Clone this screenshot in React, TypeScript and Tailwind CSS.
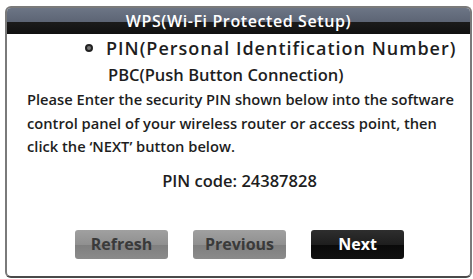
export default function App() {
  return (
    <div className="h-[279px] w-[473px] bg-white pl-[5px] pr-[1px] pt-[6px] pb-[1px] font-['Open_Sans',sans-serif]">
      <div className="flex h-full flex-col overflow-hidden rounded-[6px] border-2 border-[#7a7a7a] border-b-[#4a4a4a]">
        <div className="flex h-[26px] items-center justify-center bg-[linear-gradient(to_bottom,#6c7585_0%,#5c6474_55%,#1b1b1b_55%,#111_100%)] text-[16px] tracking-[0.6px] font-semibold text-white">
          WPS(Wi-Fi Protected Setup)
        </div>
        <div className="flex flex-1 flex-col text-[#1e1e1e]">
          <div className="flex h-[28px] items-center pl-[78px] text-[18px] tracking-[1px] font-semibold">
            <span className="mr-[13px] h-[8px] w-[8px] rounded-full border-[2.5px] border-[#222] bg-[#777]" />
            PIN(Personal Identification Number)
          </div>
          <div className="flex h-[26px] items-center pl-[101px] text-[16.5px] font-semibold">
            PBC(Push Button Connection)
          </div>
          <p className="pl-[20px] pr-[12px] text-[14.7px] font-semibold leading-[23.5px]">
            Please Enter the security PIN shown below into the software control panel of your wireless router or access point, then click the ‘NEXT’ button below.
          </p>
          <div className="mt-[11px] h-[22px] pl-[2px] text-center text-[16.5px] leading-[22px] font-semibold">PIN code: 24387828</div>
          <div className="mt-[38px] flex gap-[25px] pl-[68px]">
            <button className="h-[29px] w-[93px] rounded-[3px] bg-[linear-gradient(to_bottom,#a0a0a0_0%,#909090_50%,#7f7f7f_52%,#8b8b8b_100%)] text-[16px] font-bold text-[#3a3a3a]">
              Refresh
            </button>
            <button className="h-[29px] w-[93px] rounded-[3px] bg-[linear-gradient(to_bottom,#a0a0a0_0%,#909090_50%,#7f7f7f_52%,#8b8b8b_100%)] text-[16px] font-bold text-[#3a3a3a]">
              Previous
            </button>
            <button className="h-[29px] w-[93px] rounded-[3px] bg-[linear-gradient(to_bottom,#2e2e2e_0%,#1e1e1e_50%,#0a0a0a_52%,#111_100%)] text-[16px] font-bold text-white">
              Next
            </button>
          </div>
        </div>
      </div>
    </div>
  );
}
